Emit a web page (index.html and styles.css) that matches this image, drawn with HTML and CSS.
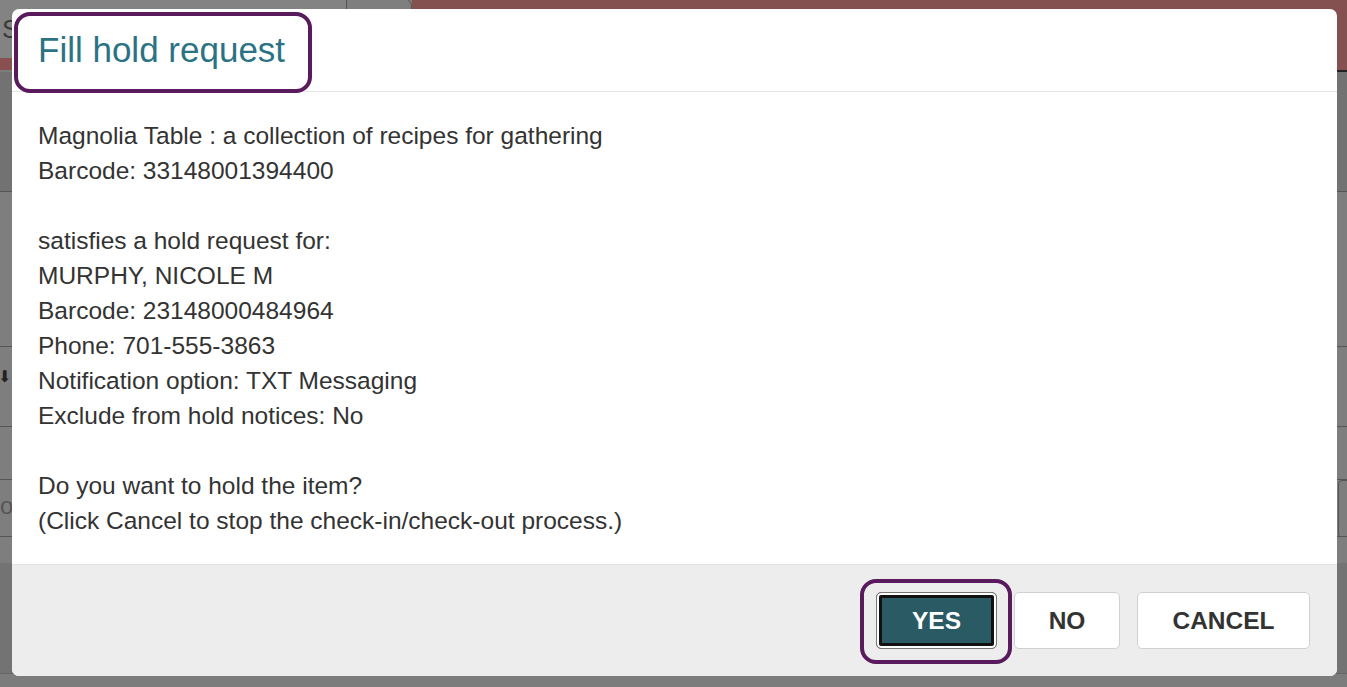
FILE: index.html
```html
<!DOCTYPE html>
<html lang="en">
  <head>
    <meta charset="UTF-8" />
    <meta name="viewport" content="width=device-width, initial-scale=1.0" />
    <title>Fill hold request</title>
    <link rel="stylesheet" href="styles.css">
  </head>
  <body>
    <!-- page behind the dialog, dimmed -->
    <div class="app">
      <div class="topbar">
        <div class="tb-left">
          <div class="tb-tabs">
            <span class="tb-label">S</span>
            <span class="tb-tab"></span>
          </div>
          <div class="tb-red"></div>
        </div>
        <div class="tb-right"></div>
      </div>
      <div class="band band-dark"></div>
      <div class="band band-list"></div>
      <div class="band band-tools"><span class="dl-icon">&#x2B07;</span></div>
      <div class="band band-row"></div>
      <div class="band band-input"><span class="ghost">o</span><span class="ghost-input"></span></div>
      <div class="band band-row2"></div>
      <div class="band band-low"></div>
    </div>

    <div class="modal">
      <div class="modal-header">
        <h4 class="modal-title"><span class="mark mark-title">Fill hold request</span></h4>
      </div>
      <div class="modal-body">
        <p>Magnolia Table : a collection of recipes for gathering<br>Barcode: 33148001394400</p>
        <p>satisfies a hold request for:<br>MURPHY, NICOLE M<br>Barcode: 23148000484964<br>Phone: 701-555-3863<br>Notification option: TXT Messaging<br>Exclude from hold notices: No</p>
        <p>Do you want to hold the item?<br>(Click Cancel to stop the check-in/check-out process.)</p>
      </div>
      <div class="modal-footer">
        <span class="mark mark-btn"><button class="btn btn-primary btn-yes">YES</button></span>
        <button class="btn btn-no">NO</button>
        <button class="btn btn-cancel">CANCEL</button>
      </div>
    </div>
  </body>
</html>
```

FILE: styles.css
```css
body {
  margin: 0;
  font-family: "Liberation Sans", Arial, sans-serif;
  background: #7c7c7c;
  height: 687px;
  overflow: hidden;
  position: relative;
}
.app {
  display: flex;
  flex-direction: column;
}
.topbar {
  display: flex;
  height: 72px;
}
.tb-left {
  width: 412px;
  display: flex;
  flex-direction: column;
}
.tb-tabs {
  height: 58px;
  background: #838383;
  position: relative;
}
.tb-label {
  position: absolute;
  left: 2px;
  top: 14px;
  font-size: 26px;
  color: #3a3a3a;
}
.tb-tab {
  position: absolute;
  left: 346px;
  top: -2px;
  width: 64px;
  height: 40px;
  border: 1px solid #555;
  border-radius: 0 8px 0 0;
  background: #7f7f7f;
}
.tb-red {
  height: 12px;
  background: #885050;
}
.tb-right {
  flex: 1;
  background: #845050;
  border-bottom: 2px solid #222;
}
.band {
  border-bottom: 1px solid #555;
  position: relative;
}
.band-dark {
  height: 119px;
  background: #727272;
}
.band-list {
  height: 154px;
  background: #7e7e7e;
}
.band-tools {
  height: 79px;
  background: #7e7e7e;
}
.dl-icon {
  position: absolute;
  left: -2px;
  top: 20px;
  font-size: 16px;
  color: #222;
}
.band-row {
  height: 52px;
  background: #7e7e7e;
}
.band-input {
  height: 56px;
  background: #7e7e7e;
}
.ghost {
  position: absolute;
  left: 0;
  top: 12px;
  font-size: 24px;
  color: #555;
}
.ghost-input {
  position: absolute;
  left: 1338px;
  top: 0;
  width: 20px;
  height: 56px;
  border: 1px solid #555;
  border-radius: 4px;
}
.band-row2 {
  height: 26px;
  background: #7e7e7e;
  border-bottom: none;
}
.band-low {
  height: 110px;
  background: #737373;
  border-bottom: 1px solid #666;
}

.modal {
  position: absolute;
  left: 12px;
  top: 9px;
  width: 1325px;
  height: 667px;
  background: #fff;
  border-radius: 7px;
  display: flex;
  flex-direction: column;
  overflow: hidden;
}
.modal-header {
  padding: 26px;
  border-bottom: 1px solid #e5e5e5;
}
.modal-title {
  margin: 0;
  font-size: 35px;
  line-height: 30px;
  font-weight: normal;
  color: #2b7384;
}
.mark {
  position: relative;
  display: inline-block;
}
.mark::after {
  content: "";
  position: absolute;
  border: 4px solid #5a1a5e;
  border-radius: 16px;
  pointer-events: none;
}
.mark-title::after {
  top: -23px;
  right: -27px;
  bottom: -28px;
  left: -24px;
}
.mark-btn::after {
  top: -13px;
  right: -15px;
  bottom: -15px;
  left: -16px;
}
.modal-body {
  flex: 1;
  padding: 26px;
  font-size: 24.5px;
  line-height: 35px;
  color: #333;
}
.modal-body p {
  margin: 0 0 35px;
}
.modal-body p:last-child {
  margin-bottom: 0;
}
.modal-footer {
  height: 111px;
  background: #ededed;
  border-top: 1px solid #e2e2e2;
  display: flex;
  justify-content: flex-end;
  align-items: center;
  gap: 17px;
  padding: 0 27px;
}
.btn {
  display: block;
  height: 57px;
  padding: 0;
  background: #fff;
  border: 1px solid #d0d0d0;
  border-radius: 5px;
  font-family: "Liberation Sans", Arial, sans-serif;
  font-size: 24.5px;
  font-weight: bold;
  color: #333;
  text-align: center;
}
.btn-yes {
  width: 121px;
}
.btn-no {
  width: 106px;
}
.btn-cancel {
  width: 173px;
}
.btn-primary {
  background: #2a5b65;
  color: #fff;
  border: 1px solid #777;
  box-shadow: inset 0 0 0 2px #fff, inset 0 0 0 5px #111;
}
```
